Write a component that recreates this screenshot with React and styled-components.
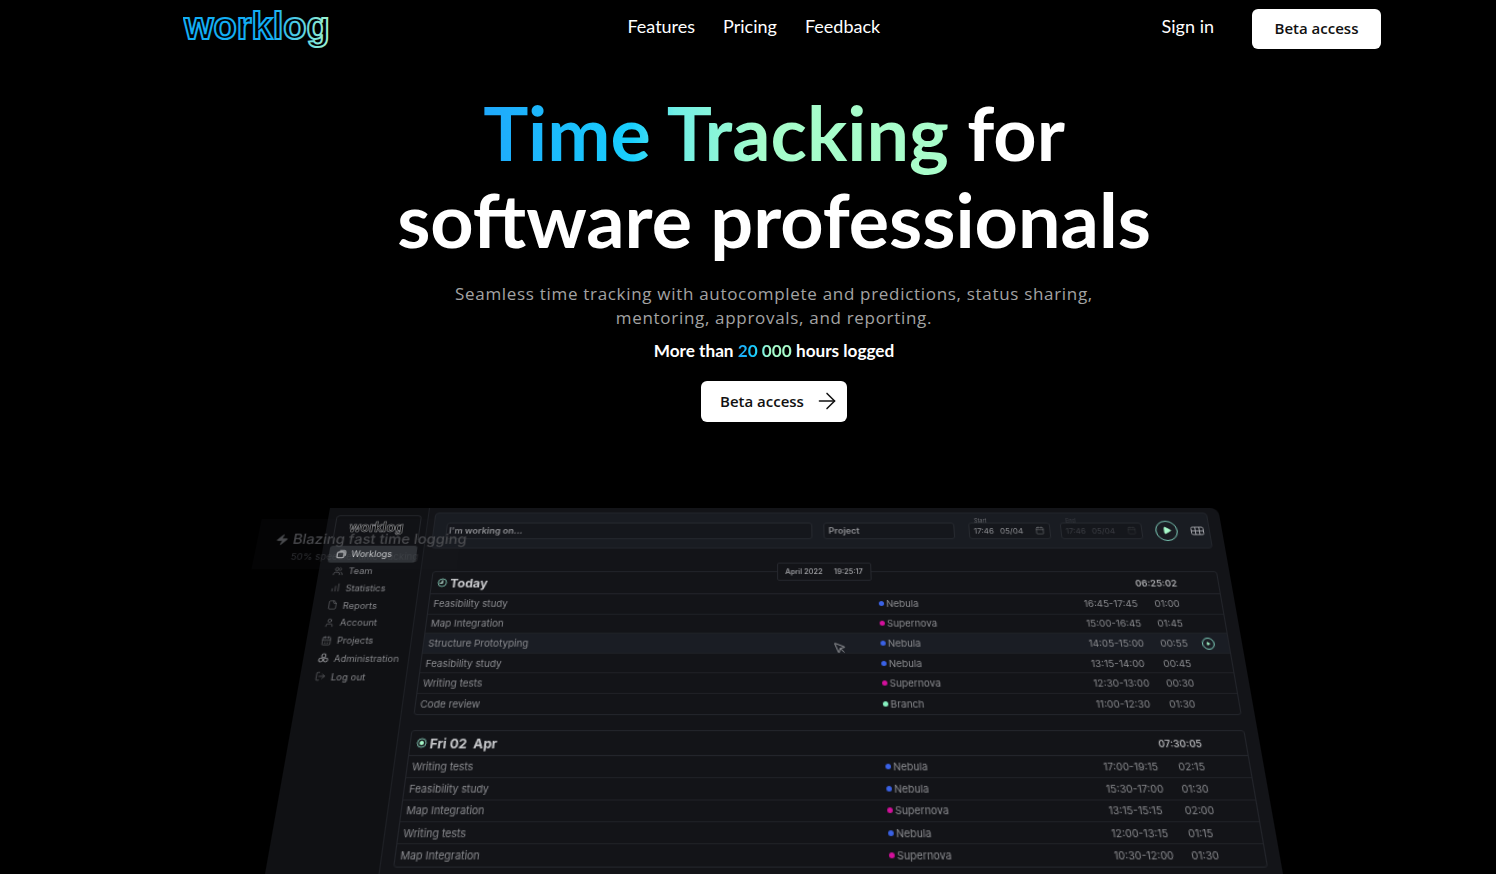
import styled, { createGlobalStyle } from "styled-components";
import { ArrowRight, CalendarDays, ChartNoAxesColumnIncreasing, File, LogOut, Play, User, Users, Zap, MousePointer, Calendar } from "lucide-react";

const GlobalStyle = createGlobalStyle`
  html, body {
    margin: 0;
    padding: 0;
    background: #000;
    overflow: hidden;
  }
`;

const Page = styled.div`
  height: 874px;
  overflow: hidden;
  background: #000;
  color: #fff;
  font-family: "Lato", sans-serif;
`;

const Nav = styled.header`
  display: flex;
  align-items: center;
  justify-content: space-between;
  height: 58px;
  padding: 0 115px 0 183px;
`;

const LogoBox = styled.div`
  display: flex;
  width: 163px;
`;

const NavLinks = styled.nav`
  display: flex;
  gap: 28px;
  padding-bottom: 6px;
  font-size: 18px;
`;

const NavRight = styled.div`
  display: flex;
  align-items: center;
  gap: 38px;
  font-size: 18px;
  & > span {
    padding-bottom: 6px;
  }
`;

const WhiteButton = styled.button`
  display: flex;
  align-items: center;
  justify-content: ${(p) => (p.$padLeft ? "flex-start" : "center")};
  gap: 10px;
  width: ${(p) => p.$width}px;
  height: ${(p) => p.$height}px;
  padding: 0 0 2px ${(p) => p.$padLeft || 0}px;
  border: 0;
  border-radius: 6px;
  background: #fff;
  color: #111;
  font-family: "Open Sans", sans-serif;
  font-size: 15px;
  font-weight: 600;
`;

const Hero = styled.section`
  display: flex;
  flex-direction: column;
  align-items: center;
  padding-left: 52px;
`;

const Title = styled.h1`
  margin: 30px 0 0;
  font-size: 75.5px;
  font-weight: 700;
  line-height: 87px;
  text-align: center;
`;

const Gradient = styled.span`
  background: linear-gradient(90deg, #1fa8fb 0%, #18cffd 32%, #70efe6 41%, #a5fccb 60%, #a9fdca 100%);
  -webkit-background-clip: text;
  background-clip: text;
  color: transparent;
`;

const Sub = styled.p`
  margin: 20px 0 0;
  color: #a3a3a3;
  font-family: "Open Sans", sans-serif;
  font-size: 17px;
  letter-spacing: 0.69px;
  line-height: 24px;
  text-align: center;
`;

const Logged = styled.p`
  margin: 9px 0 0;
  font-size: 17.2px;
  font-weight: 700;
  line-height: 24px;
`;

const HeroCta = styled.div`
  margin-top: 18px;
`;

const Stage = styled.div`
  width: 888px;
  height: 420px;
  margin-top: 86px;
  transform: perspective(1166px) rotateX(25deg);
  transform-origin: top center;
`;

const Panel = styled.div`
  position: relative;
  display: flex;
  height: 100%;
  border-radius: 8px 8px 0 0;
  background: #131418;
  font-family: "Inter", sans-serif;
  font-size: 9.4px;
  color: #8b8c90;
  filter: blur(0.3px);
`;

const Sidebar = styled.aside`
  flex: none;
  width: 100px;
  padding: 8px 6px 0 7px;
  box-sizing: border-box;
  border-right: 1px solid #1e2025;
  background: #101114;
`;

const SideLogo = styled.div`
  position: relative;
  z-index: 2;
  display: flex;
  justify-content: center;
  height: 26px;
  margin: 0 0 6px 1px;
  border: 1px solid #24262b;
  border-radius: 4px 4px 0 0;
  border-bottom: 0;
`;

const SideItem = styled.div`
  position: relative;
  z-index: ${(p) => (p.$active ? 2 : "auto")};
  display: flex;
  align-items: center;
  gap: 5.5px;
  height: 17.75px;
  padding-left: 6.5px;
  border-radius: 3px;
  background: ${(p) => (p.$active ? "rgba(72, 78, 84, 0.55)" : "transparent")};
  color: ${(p) => (p.$active ? "#c2c3c6" : "#85868a")};
  font-size: 9px;
`;

const Main = styled.main`
  flex: 1;
  min-width: 0;
  padding: 5px 12px 0 6px;
`;

const Toolbar = styled.div`
  display: flex;
  align-items: center;
  height: 39px;
  padding: 0 10px 0 12px;
  box-sizing: border-box;
  border: 1px solid #23262c;
  border-radius: 4px;
  background: #191c22;
`;

const Field = styled.div`
  position: relative;
  display: flex;
  align-items: center;
  justify-content: space-between;
  flex: none;
  width: ${(p) => p.$width}px;
  height: 18px;
  margin-right: ${(p) => p.$gap || 0}px;
  padding: 0 5px 0 ${(p) => p.$padLeft ?? 4}px;
  box-sizing: border-box;
  border: 1px solid #272a30;
  border-radius: 3px;
  background: #15171c;
  font-size: 9px;
  font-weight: 600;
  color: ${(p) => (p.$dim ? "#3c3e44" : "#8e8f93")};
`;

const FieldLabel = styled.span`
  position: absolute;
  top: -6px;
  left: 5px;
  font-size: 5.5px;
  font-weight: 400;
  color: ${(p) => (p.$dim ? "#3c3e44" : "#6a6b70")};
`;

const DateText = styled.span`
  display: flex;
  gap: 6px;
  font-size: 8px;
  font-weight: 400;
`;

const PlayCircle = styled.div`
  display: flex;
  align-items: center;
  justify-content: center;
  flex: none;
  width: ${(p) => p.$size}px;
  height: ${(p) => p.$size}px;
  margin-left: ${(p) => p.$left || 0}px;
  border: 1px solid #7fcfbc;
  border-radius: 50%;
  box-sizing: border-box;
  color: #a8fbcb;
`;

const GridIcon = styled.svg`
  flex: none;
  width: 13px;
  height: 10px;
  margin-left: 13px;
  color: #a0a1a6;
`;

const Cards = styled.div`
  position: relative;
  display: flex;
  flex-direction: column;
  gap: 14.5px;
  margin: 24px 0 0 5px;
`;

const Pill = styled.div`
  position: absolute;
  top: -9px;
  left: 336px;
  display: flex;
  align-items: center;
  gap: 11px;
  height: 17px;
  padding: 0 7px;
  border: 1px solid #26282e;
  border-radius: 2px;
  background: #131418;
  font-size: 7.3px;
  font-weight: 500;
  color: #a5a6aa;
`;

const Card = styled.section`
  border: 1px solid #23252b;
  border-radius: 3px;
`;

const CardHeader = styled.div`
  display: flex;
  align-items: center;
  justify-content: space-between;
  height: 22px;
  padding: 0 40px 0 4.5px;
  border-bottom: 1px solid #23252b;
`;

const CardTitle = styled.div`
  display: flex;
  align-items: center;
  gap: 3px;
  color: #c6c7ca;
  font-size: 12.2px;
  font-weight: 700;
`;

const Total = styled.span`
  color: #a8a9ac;
  font-size: 9px;
  font-weight: 600;
`;

const Row = styled.div`
  position: relative;
  display: grid;
  grid-template-columns: 429px 197.5px 68px 1fr;
  align-items: center;
  height: ${(p) => p.$h}px;
  padding-left: 4px;
  box-sizing: border-box;
  background: ${(p) => (p.$hover ? "#1a1d24" : "transparent")};
  & + & {
    border-top: 1px solid #1f2126;
  }
`;

const Project = styled.span`
  display: flex;
  align-items: center;
  gap: 2px;
`;

const Dot = styled.i`
  flex: none;
  width: 5px;
  height: 5px;
  border-radius: 50%;
  background: ${(p) => p.$color};
`;

const RowPlay = styled.div`
  position: absolute;
  top: 4px;
  right: 13px;
`;

const Cursor = styled.div`
  position: absolute;
  top: 8px;
  left: 388px;
  display: flex;
  color: #c9cacd;
`;

const Floating = styled.div`
  position: absolute;
  z-index: 1;
  top: 12px;
  left: -66px;
  width: 200px;
  height: 54px;
  padding: 13px 0 0 18px;
  box-sizing: border-box;
  background-color: rgba(28, 28, 32, 0.14);
  background-image: radial-gradient(rgba(255, 255, 255, 0.05) 0.6px, transparent 0.7px);
  background-size: 4px 4px;
  color: #4a4b4f;
  pointer-events: none;
`;

const FloatTitle = styled.div`
  display: flex;
  align-items: center;
  gap: 4px;
  width: max-content;
  font-size: 14.6px;
  font-weight: 500;
  white-space: nowrap;
`;

const FloatSub = styled.div`
  margin: 4px 0 0 18px;
  font-size: 9.6px;
  white-space: nowrap;
  color: #2f3034;
`;

const NEBULA = "#3a62e6";
const SUPERNOVA = "#d4109c";
const BRANCH = "#86f0c0";

const today = [
  ["Feasibility study", "Nebula", NEBULA, "16:45-17:45", "01:00"],
  ["Map Integration", "Supernova", SUPERNOVA, "15:00-16:45", "01:45"],
  ["Structure Prototyping", "Nebula", NEBULA, "14:05-15:00", "00:55"],
  ["Feasibility study", "Nebula", NEBULA, "13:15-14:00", "00:45"],
  ["Writing tests", "Supernova", SUPERNOVA, "12:30-13:00", "00:30"],
  ["Code review", "Branch", BRANCH, "11:00-12:30", "01:30"],
];

const friday = [
  ["Writing tests", "Nebula", NEBULA, "17:00-19:15", "02:15"],
  ["Feasibility study", "Nebula", NEBULA, "15:30-17:00", "01:30"],
  ["Map Integration", "Supernova", SUPERNOVA, "13:15-15:15", "02:00"],
  ["Writing tests", "Nebula", NEBULA, "12:00-13:15", "01:15"],
  ["Map Integration", "Supernova", SUPERNOVA, "10:30-12:00", "01:30"],
];

function WorklogIcon({ size, strokeWidth }) {
  return (
    <svg width={size} height={size} viewBox="0 0 24 24" fill="none" stroke="currentColor" strokeWidth={strokeWidth * 2.2}>
      <rect x="3" y="7" width="16" height="14" rx="3" />
      <path d="M8 3h10a4 4 0 0 1 4 4v9" />
    </svg>
  );
}

function AdminIcon({ size, strokeWidth }) {
  return (
    <svg width={size} height={size} viewBox="0 0 24 24" fill="none" stroke="currentColor" strokeWidth={strokeWidth * 2.2}>
      <circle cx="12" cy="7" r="4.5" />
      <circle cx="6.5" cy="17" r="4.5" />
      <circle cx="17.5" cy="17" r="4.5" />
    </svg>
  );
}

const menu = [
  ["Worklogs", WorklogIcon],
  ["Team", Users],
  ["Statistics", ChartNoAxesColumnIncreasing],
  ["Reports", File],
  ["Account", User],
  ["Projects", CalendarDays],
  ["Administration", AdminIcon],
  ["Log out", LogOut],
];

function Logo({ width, height, size, y, x, from, to, id, strokeWidth }) {
  return (
    <svg width={width} height={height} viewBox={`0 0 ${width} ${height}`}>
      <defs>
        <linearGradient id={id} x1="0" y1="0" x2="1" y2="0">
          <stop offset="0" stopColor={from} />
          <stop offset="0.6" stopColor={from} />
          <stop offset="1" stopColor={to} />
        </linearGradient>
      </defs>
      <text
        x={x}
        y={y}
        fontFamily="Liberation Sans"
        fontWeight="700"
        fontSize={size}
        fill="#000"
        stroke={`url(#${id})`}
        strokeWidth={strokeWidth}
      >
        worklog
      </text>
    </svg>
  );
}

function TodayIcon() {
  return (
    <svg width="10" height="10" viewBox="0 0 20 20" fill="none">
      <circle cx="10" cy="10" r="8" stroke="#8fdcc6" strokeWidth="1.6" />
      <path d="M10 5v6H5" stroke="#c8f5e4" strokeWidth="2.4" />
    </svg>
  );
}

function DayIcon() {
  return (
    <svg width="10" height="10" viewBox="0 0 20 20" fill="none">
      <circle cx="10" cy="10" r="8" stroke="#8fdcc6" strokeWidth="1.6" />
      <circle cx="10" cy="10" r="4" fill="#a8fbcb" />
    </svg>
  );
}

function WorkRow({ row, hover, h }) {
  const [name, project, color, range, spent] = row;
  return (
    <Row $hover={hover} $h={h}>
      <span>{name}</span>
      <Project>
        <Dot $color={color} />
        {project}
      </Project>
      <span>{range}</span>
      <span>{spent}</span>
      {hover && (
        <>
          <Cursor>
            <MousePointer size={13} strokeWidth={1.3} />
          </Cursor>
          <RowPlay>
            <PlayCircle $size={12}>
              <Play size={4} fill="currentColor" />
            </PlayCircle>
          </RowPlay>
        </>
      )}
    </Row>
  );
}

export default function App() {
  return (
    <Page>
      <GlobalStyle />
      <Nav>
        <LogoBox>
          <Logo id="logoA" width={160} height={58} size={38} x={1} y={39} from="#12aef5" to="#9ff5cf" strokeWidth={2} />
        </LogoBox>
        <NavLinks>
          <span>Features</span>
          <span>Pricing</span>
          <span>Feedback</span>
        </NavLinks>
        <NavRight>
          <span>Sign in</span>
          <WhiteButton $width={129} $height={40}>Beta access</WhiteButton>
        </NavRight>
      </Nav>
      <Hero>
        <Title>
          <Gradient>Time Tracking</Gradient> for
          <br />
          software professionals
        </Title>
        <Sub>
          Seamless time tracking with autocomplete and predictions, status sharing,
          <br />
          mentoring, approvals, and reporting.
        </Sub>
        <Logged>
          More than <Gradient>20 000</Gradient> hours logged
        </Logged>
        <HeroCta>
          <WhiteButton $width={146} $height={41} $padLeft={19}>
            Beta access
            <ArrowRight size={26} strokeWidth={1.4} />
          </WhiteButton>
        </HeroCta>
        <Stage>
          <Panel>
            <Sidebar>
              <SideLogo>
                <Logo id="logoB" width={60} height={26} size={14} x={2} y={17} from="#a4a5a9" to="#a4a5a9" strokeWidth={0.6} />
              </SideLogo>
              {menu.map(([label, Icon], i) => (
                <SideItem key={label} $active={i === 0}>
                  <Icon size={10} strokeWidth={1.2} />
                  {label}
                </SideItem>
              ))}
            </Sidebar>
            <Main>
              <Toolbar>
                <Field $width={363} $gap={11} $padLeft={2}>I'm working on...</Field>
                <Field $width={130} $gap={14}>Project</Field>
                <Field $width={81} $gap={10}>
                  <FieldLabel>Start</FieldLabel>
                  <DateText><span>17:46</span><span>05/04</span></DateText>
                  <Calendar size={9} strokeWidth={1.2} />
                </Field>
                <Field $width={81} $dim>
                  <FieldLabel $dim>End</FieldLabel>
                  <DateText><span>17:46</span><span>05/04</span></DateText>
                  <Calendar size={9} strokeWidth={1.2} />
                </Field>
                <PlayCircle $size={22} $left={13}>
                  <Play size={9} fill="currentColor" />
                </PlayCircle>
                <GridIcon viewBox="0 0 26 20" fill="none" stroke="currentColor" strokeWidth="2">
                  <rect x="1" y="2" width="24" height="16" rx="3" />
                  <path d="M9 2v16M17 2v16M1 10h24" />
                </GridIcon>
              </Toolbar>
              <Cards>
                <Pill>
                  <span>April 2022</span>
                  <span>19:25:17</span>
                </Pill>
                <Card>
                  <CardHeader>
                    <CardTitle>
                      <TodayIcon />
                      Today
                    </CardTitle>
                    <Total>06:25:02</Total>
                  </CardHeader>
                  {today.map((row, i) => (
                    <WorkRow key={i} row={row} hover={i === 2} h={19.6} />
                  ))}
                </Card>
                <Card>
                  <CardHeader>
                    <CardTitle>
                      <DayIcon />
                      Fri 02&nbsp; Apr
                    </CardTitle>
                    <Total>07:30:05</Total>
                  </CardHeader>
                  {friday.map((row, i) => (
                    <WorkRow key={i} row={row} h={19.3} />
                  ))}
                </Card>
              </Cards>
            </Main>
            <Floating>
              <FloatTitle>
                <Zap size={13} strokeWidth={1.2} fill="currentColor" />
                Blazing fast time logging
              </FloatTitle>
              <FloatSub>50% speedier time tracking</FloatSub>
            </Floating>
          </Panel>
        </Stage>
      </Hero>
    </Page>
  );
}
